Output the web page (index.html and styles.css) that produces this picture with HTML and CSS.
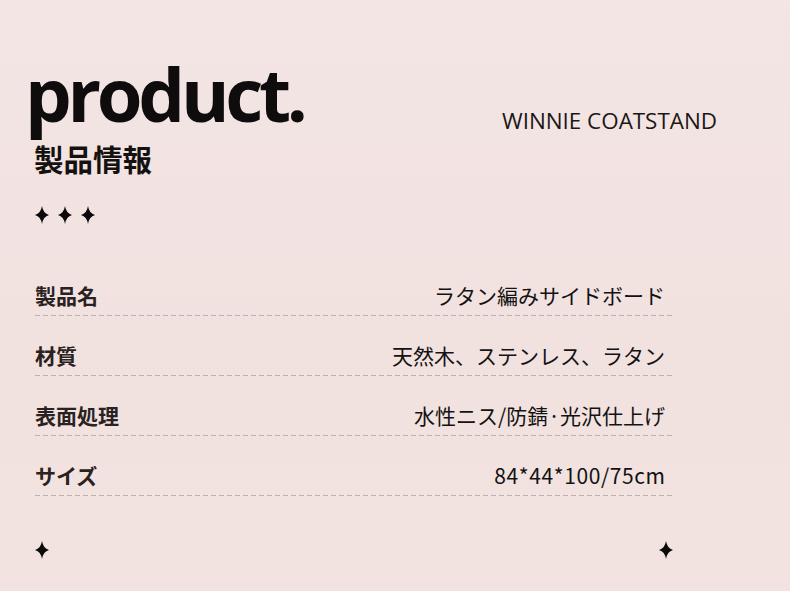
FILE: index.html
```html
<!DOCTYPE html>
<html lang="ja">
<head>
<meta charset="utf-8">
<title>product.</title>
<link rel="stylesheet" href="styles.css">
</head>
<body>
<div class="page">
  <header class="header">
    <div class="titles">
      <h1 class="title">product.</h1>
      <h2 class="subtitle">製品情報</h2>
    </div>
    <div class="brand">WINNIE COATSTAND</div>
  </header>

  <div class="stars">
    <svg class="star" viewBox="0 0 14 18"><path d="M7 0 Q8.2 7.4 14 9 Q8.2 10.6 7 18 Q5.8 10.6 0 9 Q5.8 7.4 7 0Z"/></svg>
    <svg class="star" viewBox="0 0 14 18"><path d="M7 0 Q8.2 7.4 14 9 Q8.2 10.6 7 18 Q5.8 10.6 0 9 Q5.8 7.4 7 0Z"/></svg>
    <svg class="star" viewBox="0 0 14 18"><path d="M7 0 Q8.2 7.4 14 9 Q8.2 10.6 7 18 Q5.8 10.6 0 9 Q5.8 7.4 7 0Z"/></svg>
  </div>

  <div class="specs">
    <div class="row"><span class="label">製品名</span><span class="value">ラタン編みサイドボード</span></div>
    <div class="row"><span class="label">材質</span><span class="value">天然木、ステンレス、ラタン</span></div>
    <div class="row"><span class="label">表面処理</span><span class="value">水性ニス/防錆·光沢仕上げ</span></div>
    <div class="row"><span class="label">サイズ</span><span class="value value-num">84*44*100/75cm</span></div>
  </div>

  <div class="footer-stars">
    <svg class="star" viewBox="0 0 14 18"><path d="M7 0 Q8.2 7.4 14 9 Q8.2 10.6 7 18 Q5.8 10.6 0 9 Q5.8 7.4 7 0Z"/></svg>
    <svg class="star" viewBox="0 0 14 18"><path d="M7 0 Q8.2 7.4 14 9 Q8.2 10.6 7 18 Q5.8 10.6 0 9 Q5.8 7.4 7 0Z"/></svg>
  </div>
</div>
</body>
</html>
```

FILE: styles.css
```css
html, body {
  margin: 0;
  padding: 0;
}
body {
  width: 790px;
  height: 591px;
  overflow: hidden;
  background: linear-gradient(180deg, #f3e5e3 0%, #f1e2e0 60%, #f2e3e0 100%);
  font-family: "Noto Sans CJK JP", "Noto Sans", sans-serif;
  color: #1a1616;
}
.page {
  padding: 57px 0 0 34px;
}
.header {
  display: flex;
  justify-content: space-between;
  align-items: flex-start;
  padding-right: 73px;
}
.title {
  margin: 0 0 0 -9px;
  font-family: "Open Sans", sans-serif;
  font-weight: 700;
  font-size: 74px;
  line-height: 74px;
  letter-spacing: -4.3px;
  color: #0e0c0c;
}
.subtitle {
  margin: 13px 0 0 0;
  font-family: "Noto Sans CJK JP", sans-serif;
  font-weight: 700;
  font-size: 29.5px;
  line-height: 29px;
  color: #141111;
}
.brand {
  margin-top: 53px;
  font-family: "Open Sans", sans-serif;
  font-size: 22.4px;
  line-height: 22px;
  color: #1b1717;
}
.stars {
  display: flex;
  gap: 9px;
  margin: 33px 0 0 1px;
}
.star {
  width: 14px;
  height: 18px;
  display: block;
  fill: #0b0909;
}
.specs {
  width: 638px;
  margin: 61px 0 0 1px;
  display: flex;
  flex-direction: column;
  gap: 29px;
}
.row {
  display: flex;
  justify-content: space-between;
  align-items: baseline;
  padding: 0 8px 10px 0;
  background: repeating-linear-gradient(90deg, #bdb1b0 0 5px, transparent 5px 8px) bottom left / 100% 1px no-repeat;
}
.label {
  font-weight: 700;
  font-size: 21px;
  line-height: 21px;
  color: #2a2121;
}
.value {
  font-size: 21px;
  line-height: 21px;
  color: #141212;
}
.value-num {
  letter-spacing: 0.6px;
  margin-right: -0.6px;
}
.footer-stars {
  width: 638px;
  margin: 45px 0 0 1px;
  display: flex;
  justify-content: space-between;
}
```
